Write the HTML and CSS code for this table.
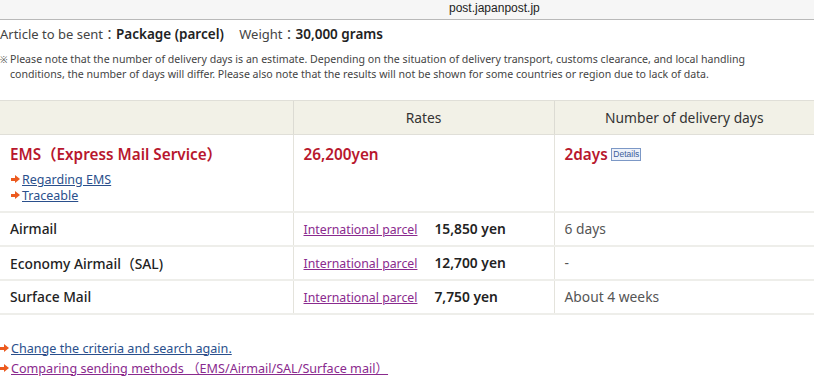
FILE: index.html
```html
<!DOCTYPE html>
<html lang="en">
<head>
<meta charset="utf-8">
<link rel="stylesheet" href="styles.css">
</head>
<body>
<div class="urlbar">post.japanpost.jp</div>
<div class="summary">
  <span class="label">Article to be sent：</span><b class="val">Package (parcel)</b>
  <span class="label gap">Weight：</span><b class="val">30,000 grams</b>
</div>
<p class="note"><span class="kome">※</span>Please note that the number of delivery days is an estimate. Depending on the situation of delivery transport, customs clearance, and local handling conditions, the number of days will differ. Please also note that the results will not be shown for some countries or region due to lack of data.</p>
<table class="rates">
  <thead>
    <tr><th class="c1"></th><th class="c2">Rates</th><th class="c3">Number of delivery days</th></tr>
  </thead>
  <tbody>
    <tr class="ems">
      <td>
        <div class="ems-name">EMS（Express Mail Service）</div>
        <ul class="arrows">
          <li><a href="#" class="blue">Regarding EMS</a></li>
          <li><a href="#" class="blue">Traceable</a></li>
        </ul>
      </td>
      <td><span class="ems-val">26,200yen</span></td>
      <td><span class="ems-val">2days</span> <span class="details">Details</span></td>
    </tr>
    <tr>
      <td class="name">Airmail</td>
      <td><a href="#" class="purple">International parcel</a><span class="price">15,850 yen</span></td>
      <td class="days">6 days</td>
    </tr>
    <tr>
      <td class="name">Economy Airmail（SAL)</td>
      <td><a href="#" class="purple">International parcel</a><span class="price">12,700 yen</span></td>
      <td class="days">-</td>
    </tr>
    <tr>
      <td class="name">Surface Mail</td>
      <td><a href="#" class="purple">International parcel</a><span class="price">7,750 yen</span></td>
      <td class="days">About 4 weeks</td>
    </tr>
  </tbody>
</table>
<ul class="arrows bottom">
  <li><a href="#" class="blue">Change the criteria and search again.</a></li>
  <li><a href="#" class="purple">Comparing sending methods （EMS/Airmail/SAL/Surface mail）</a></li>
</ul>
</body>
</html>
```
FILE: styles.css
```css
* { box-sizing: border-box; }
html, body { margin: 0; padding: 0; background: #fff; }
body {
  font-family: "Noto Sans", "Noto Sans CJK JP", sans-serif;
  color: #333;
  width: 814px;
  overflow: hidden;
}
.urlbar {
  height: 20px;
  background: #f6f6f6;
  border-bottom: 1px solid #b9b9b9;
  font-family: "Liberation Sans", sans-serif;
  font-size: 12px;
  line-height: 17px;
  color: #222;
  padding-left: 449px;
}
.summary {
  margin-top: 6px;
  font-size: 13px;
  line-height: 17px;
  color: #444;
}
.summary .val { font-weight: 600; color: #222; font-size: 13.5px; }
.summary .gap { margin-left: 12px; }
.note {
  margin: 9px 0 0;
  font-size: 10.6px;
  line-height: 15px;
  color: #444;
  padding-left: 10px;
  text-indent: -10px;
  padding-right: 50px;
}
.kome { display: inline-block; width: 10px; text-indent: 0; font-size: 9px; }
.rates {
  margin-top: 18px;
  width: 814px;
  border-collapse: collapse;
  font-size: 13.8px;
}
.rates th {
  background: #f2f1e7;
  height: 34px;
  font-weight: 400;
  color: #333;
  border-top: 1px solid #e0dfd8;
  border-bottom: 1px solid #e0dfd8;
  padding: 0;
}
.rates th.c1 { width: 293px; }
.rates th.c2 { width: 261px; border-left: 1px solid #dcdbd3; }
.rates th.c3 { border-left: 1px solid #dcdbd3; }
.rates td {
  border-bottom: 2px solid #eeeeea;
  padding: 0 10px;
  height: 34px;
  vertical-align: middle;
}
.rates td + td { border-left: 1px solid #e4e3dc; }
.rates tr.ems td { vertical-align: top; padding-top: 9px; height: 77px; }
.ems-name, .ems-val {
  color: #b8172d;
  font-size: 15.3px;
  font-weight: 600;
  line-height: 20px;
}
.arrows { list-style: none; margin: 8px 0 0; padding: 0; font-size: 12.5px; line-height: 16px; }
.arrows li { padding-left: 12px; position: relative; }
.arrows li::before {
  content: "";
  position: absolute;
  left: 1px; top: 6px;
  width: 5px; height: 3px;
  background: #ec5a1f;
}
.arrows li::after {
  content: "";
  position: absolute;
  left: 5px; top: 3px;
  border-left: 5px solid #ec5a1f;
  border-top: 4.5px solid transparent;
  border-bottom: 4.5px solid transparent;
}
a.blue { color: #2a4f8c; }
a.purple { color: #8a2a8e; font-size: 12.3px; }
.details {
  display: inline-block;
  vertical-align: 3px;
  font-size: 8.5px;
  line-height: 11px;
  padding: 0 1px;
  border: 1px solid #7c98c6;
  background: #eef2fa;
  color: #3c5e9a;
  font-family: "Liberation Sans Narrow", "Liberation Sans", sans-serif;
}
.name { color: #222; font-weight: 500; }
.price { margin-left: 17px; font-weight: 600; color: #222; }
.days { color: #555; }
.bottom { margin-top: 24px; font-size: 12.6px; line-height: 20px; }
.bottom li { padding-left: 11px; }
.bottom li::before { top: 8px; left: 0; }
.bottom li::after { top: 5px; left: 4px; }
.bottom a.purple { font-size: 12.6px; }
```
